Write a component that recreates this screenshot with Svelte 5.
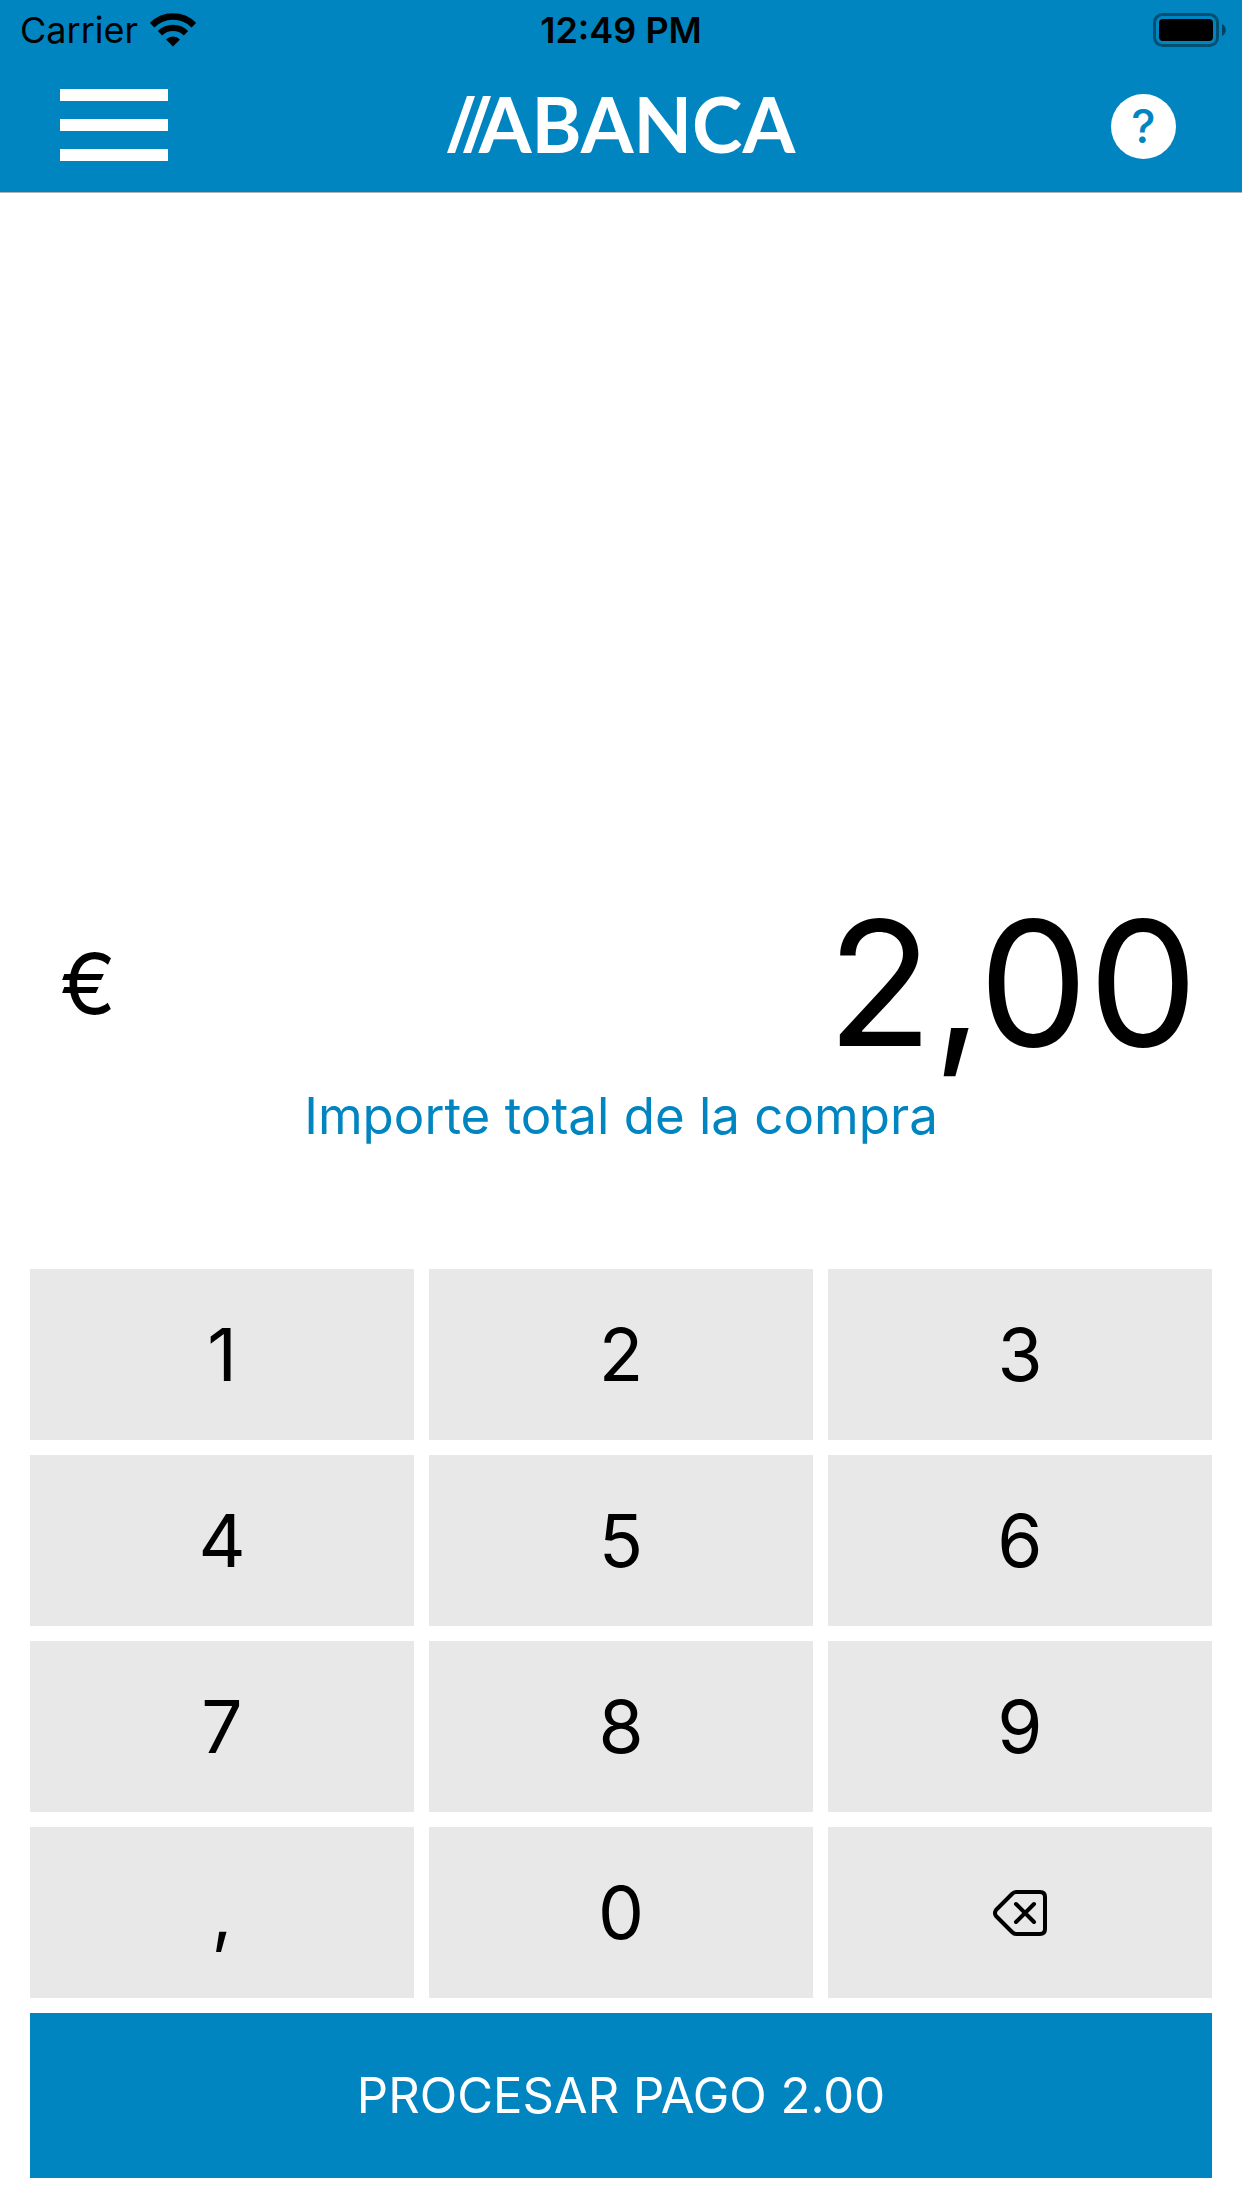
<script>
  const keys = ["1", "2", "3", "4", "5", "6", "7", "8", "9", ",", "0"];

  let entry = $state("2");

  let cents = $derived(Math.round(Number(entry.replace(",", ".")) * 100));
  let total = $derived((cents / 100).toFixed(2));

  function press(key) {
    if (key === "," && entry.includes(",")) return;
    if (/,\d\d$/.test(entry) || entry.length > 6) return;
    entry = entry === "0" && key !== "," ? key : entry + key;
  }

  function erase() {
    entry = entry.slice(0, -1) || "0";
  }
</script>

<div class="app">
  <header>
    <div class="status">
      <div class="carrier">
        <span>Carrier</span>
        <svg width="46" height="34" viewBox="0 0 46 34" aria-hidden="true">
          <g fill="none" stroke="#000">
            <path d="M2.1 12.2A29.5 29.5 0 0 1 43.9 12.2" stroke-width="6.6" />
            <path d="M10 20.2A18.5 18.5 0 0 1 36 20.2" stroke-width="6.2" />
          </g>
          <path d="M23 33.4L16 26.4A10 10 0 0 1 30 26.4Z" />
        </svg>
      </div>
      <time>12:49 PM</time>
      <svg class="battery" width="74" height="34" viewBox="0 0 74 34" aria-hidden="true">
        <rect x="1.5" y="1.5" width="63" height="31" rx="8" fill="none" stroke="#000" stroke-opacity=".4" stroke-width="3" />
        <rect x="6" y="6" width="54" height="22" rx="4" />
        <path d="M69 11C74 13 74 21 69 23Z" fill-opacity=".5" />
      </svg>
    </div>
    <nav>
      <button class="menu" aria-label="Menú">
        <i></i>
        <i></i>
        <i></i>
      </button>
      <div class="logo">
        <svg width="44" height="57" viewBox="0 0 44 57" fill="#fff" aria-hidden="true">
          <path d="M20 0H28L8 57H0Z" />
          <path d="M36 0H44L24 57H16Z" />
        </svg>
        <span>ABANCA</span>
      </div>
      <button class="help" aria-label="Ayuda">?</button>
    </nav>
  </header>

  <main>
    <div class="amount">
      <span class="currency">€</span>
      <output>{total.replace(".", ",")}</output>
    </div>
    <p>Importe total de la compra</p>
  </main>

  <div class="keypad">
    {#each keys as key}
      <button class="key" onclick={() => press(key)}>{key}</button>
    {/each}
    <button class="key" aria-label="Borrar" onclick={erase}>
      <svg width="54" height="46" viewBox="0 0 54 46" fill="none" stroke="#000" stroke-width="4" stroke-linecap="round" stroke-linejoin="round">
        <path d="M23 2H47Q52 2 52 7V39Q52 44 47 44H23Q21 44 19 42L3 26Q1 23 3 20L19 4Q21 2 23 2Z" />
        <path d="M23 14L41 32M41 14L23 32" />
      </svg>
    </button>
    <button class="pay">PROCESAR PAGO {total}</button>
  </div>
</div>

<style>
  :global(body) {
    background: #fff;
  }

  .app {
    display: flex;
    flex-direction: column;
    min-height: 100vh;
    font-family: Inter, "Liberation Sans", sans-serif;
    color: #000;
  }

  button {
    padding: 0;
    border: 0;
    border-radius: 0;
    font-family: inherit;
    cursor: pointer;
  }

  svg {
    display: block;
  }

  header {
    background: #0085c1;
    border-bottom: 1px solid #b2b2b2;
  }

  .status {
    display: grid;
    grid-template-columns: 1fr auto 1fr;
    align-items: center;
    height: 60px;
    padding: 0 15px;
    font-size: 36px;
  }

  .carrier {
    display: flex;
    align-items: center;
    gap: 12px;
    padding-left: 5px;
  }

  time {
    font-weight: 600;
  }

  .battery {
    justify-self: end;
  }

  nav {
    display: grid;
    grid-template-columns: 1fr auto 1fr;
    align-items: center;
    height: 132px;
    padding: 0 66px;
  }

  .menu {
    display: flex;
    flex-direction: column;
    gap: 18px;
    width: 108px;
    margin-left: -6px;
    padding-bottom: 2px;
    background: none;
  }

  .menu i {
    height: 12px;
    background: #fff;
  }

  .logo {
    display: flex;
    align-items: center;
    padding-bottom: 4px;
    color: #fff;
  }

  .logo span {
    margin-left: -12px;
    font-family: Lato, sans-serif;
    font-size: 76px;
    font-weight: 700;
    line-height: 72px;
  }

  .help {
    justify-self: end;
    width: 65px;
    height: 65px;
    border-radius: 50%;
    background: #fff;
    color: #0085c1;
    font-size: 46px;
    font-weight: 500;
    line-height: 65px;
  }

  main {
    display: flex;
    flex: 1;
    flex-direction: column;
    justify-content: flex-end;
    padding: 0 44px 125px;
  }

  .amount {
    display: flex;
    align-items: center;
    justify-content: space-between;
    padding-left: 16px;
  }

  .currency {
    font-size: 84px;
  }

  output {
    font-size: 174px;
    line-height: 210px;
  }

  p {
    margin: 0;
    color: #0085c1;
    font-size: 51px;
    line-height: 56px;
    text-align: center;
  }

  .keypad {
    display: grid;
    grid-template-columns: repeat(3, 1fr);
    gap: 15px;
    padding: 0 30px 30px;
  }

  .key {
    display: flex;
    align-items: center;
    justify-content: center;
    height: 171px;
    background: #e8e8e8;
    color: #000;
    font-size: 73px;
  }

  .pay {
    grid-column: 1 / -1;
    height: 165px;
    background: #0085c1;
    color: #fff;
    font-size: 49px;
  }
</style>
